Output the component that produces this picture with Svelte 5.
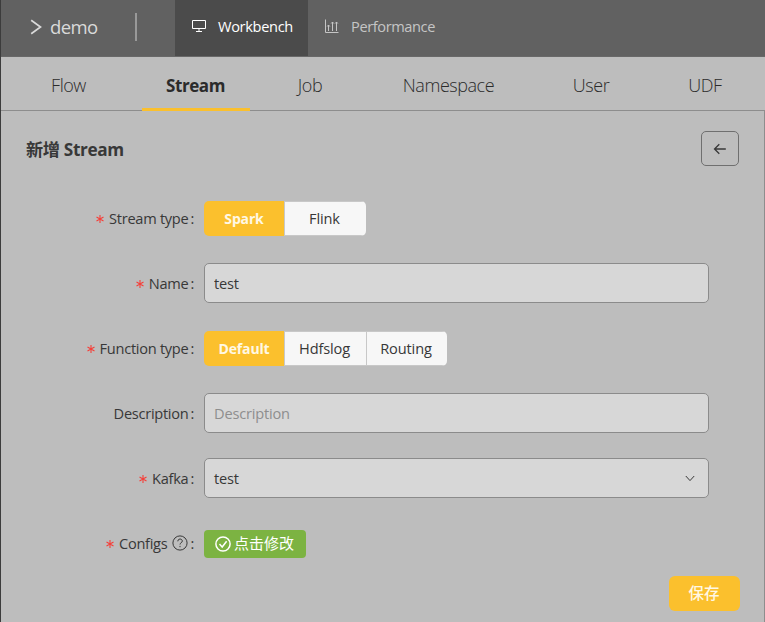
<script>
  let stream = $state('Spark');
  let fn = $state('Default');
  const tabs = [
    { name: 'Flow', width: 136 },
    { name: 'Stream', width: 118 },
    { name: 'Job', width: 111 },
    { name: 'Namespace', width: 166 },
    { name: 'User', width: 119 },
    { name: 'UDF', width: 109 }
  ];
</script>

{#snippet label(text, required = true, help = false)}
  <div class="label">
    {#if required}
      <svg class="star" width="8" height="8" viewBox="0 0 8 8"><path d="M4 0v8M.5 2l7 4M7.5 2l-7 4" /></svg>
    {/if}
    <span>{text}</span>
    {#if help}
      <svg class="help" width="16" height="16" viewBox="0 0 16 16">
        <circle cx="8" cy="8" r="7.1" />
        <path d="M5.8 6.3C5.8 3.2 10.3 3.4 10.3 6.1C10.3 7.8 8 7.7 8 9.5M8 10.9v1.3" />
      </svg>
    {/if}
    <i>:</i>
  </div>
{/snippet}

<div class="app">
  <header>
    <div class="brand">
      <svg width="12" height="16" viewBox="0 0 12 16"><path d="M1.2 1.2L10.5 8L1.2 14.8" /></svg>
      <span>demo</span>
    </div>
    <div class="rule"></div>
    <div class="nav active">
      <svg width="16" height="14" viewBox="0 0 16 14"><path d="M1.5 1.5h13v8h-13zM8 9.5v3M5 12.5h6" /></svg>
      <span>Workbench</span>
    </div>
    <div class="nav perf">
      <svg width="15" height="15" viewBox="0 0 15 15"><path d="M1.5 .5v13h13M4.5 6v6M8.5 3v9M12.5 3v9M3.2 7.5l1.3-1.5l1.3 1.5M7.2 4.5l1.3-1.5l1.3 1.5M11.2 4.5l1.3-1.5l1.3 1.5" /></svg>
      <span>Performance</span>
    </div>
  </header>

  <nav>
    {#each tabs as tab}
      <div class="tab" class:selected={tab.name === 'Stream'} style:width="{tab.width}px"><span>{tab.name}</span></div>
    {/each}
  </nav>

  <main>
    <div class="title">
      <h1>新增 Stream</h1>
      <button class="back" aria-label="Back">
        <svg width="14" height="12" viewBox="0 0 14 12"><path d="M12.8 6H1.5M6.3 1.2L1.5 6l4.8 4.8" /></svg>
      </button>
    </div>

    <form>
      <div class="row">
        {@render label('Stream type')}
        <div class="group">
          {#each ['Spark', 'Flink'] as item}
            <button type="button" class:on={stream === item} onclick={() => (stream = item)}>{item}</button>
          {/each}
        </div>
      </div>
      <div class="row">
        {@render label('Name')}
        <input value="test" />
      </div>
      <div class="row">
        {@render label('Function type')}
        <div class="group">
          {#each ['Default', 'Hdfslog', 'Routing'] as item}
            <button type="button" class:on={fn === item} onclick={() => (fn = item)}>{item}</button>
          {/each}
        </div>
      </div>
      <div class="row">
        {@render label('Description', false)}
        <input placeholder="Description" />
      </div>
      <div class="row">
        {@render label('Kafka')}
        <div class="select">
          <span>test</span>
          <svg width="10" height="7" viewBox="0 0 10 7"><path d="M.8 1L5 5.6L9.2 1" /></svg>
        </div>
      </div>
      <div class="row">
        {@render label('Configs', true, true)}
        <button type="button" class="modify">
          <svg width="16" height="16" viewBox="0 0 16 16"><circle cx="8" cy="8" r="7.1" /><path d="M4.5 8l2.7 3L11.6 5.3" /></svg>
          <span>点击修改</span>
        </button>
      </div>
    </form>
    <button class="save"><span>保存</span></button>
  </main>
</div>

<style>
  :global(body) { margin: 0; overflow: hidden; }
  * { box-sizing: border-box; }
  button, input { font: inherit; letter-spacing: inherit; color: inherit; margin: 0; padding: 0; outline: none; }
  svg { fill: none; stroke: currentColor; flex: none; }
  .app {
    width: 765px; height: 622px; display: flex; flex-direction: column;
    background: #bdbdbd; color: #383838; border-left: 1px solid #3c3c3c;
    font: 14.6px 'Open Sans', 'Noto Sans CJK SC', sans-serif; letter-spacing: -.2px;
  }
  header { height: 57px; flex: none; display: flex; align-items: center; background: #616161; border-bottom: 1px solid #686868; }
  .brand { display: flex; align-items: center; gap: 8px; width: 134px; padding: 0 0 3px 29px; color: #dadada; font-size: 18.5px; letter-spacing: -.6px; }
  .brand svg { stroke-width: 1.7; }
  .rule { width: 2px; height: 28px; margin-right: 38px; background: #999; margin-top: -2px; }
  .nav { height: 56px; display: flex; align-items: center; padding: 0 0 3px 16px; color: #c5c5c5; letter-spacing: -.4px; }
  .nav span { padding-bottom: 2px; }
  .nav.active { width: 133px; background: #4b4b4b; color: #fff; gap: 11px; letter-spacing: -.33px; }
  .nav.active svg { margin-top: -2px; }
  .perf { gap: 12px; }
  nav { height: 54px; flex: none; display: flex; border-bottom: 1px solid #8d8d8d; }
  .tab { height: 54px; display: flex; justify-content: center; align-items: center; padding: 2px 1px 0 0; font-size: 18px; font-weight: 300; letter-spacing: -.45px; color: #2b2b2b; }
  .selected { position: relative; font-weight: 700; font-size: 17px; letter-spacing: -.45px; }
  .selected::after { content: ''; position: absolute; left: 5px; width: 108px; bottom: 0; height: 3px; background: #fbc02d; }
  main { flex: 1; display: flex; flex-direction: column; border-right: 1px solid #8d8d8d; }
  .title { display: flex; justify-content: space-between; padding: 20px 25px 0 25px; height: 75px; }
  h1 { margin: 0; font-size: 17.2px; line-height: 37px; font-weight: 700; letter-spacing: -.35px; }
  .back { width: 38px; height: 35px; border: 1px solid #6f6f6f; border-radius: 5px; background: none; display: flex; align-items: center; justify-content: center; }
  .back svg { stroke-width: 1.3; }
  .row { height: 65px; display: flex; align-items: center; }
  .label { width: 193px; display: flex; align-items: center; justify-content: flex-end; margin-right: 10px; padding-bottom: 2px; white-space: nowrap; letter-spacing: -.28px; }
  .label i { font-style: normal; margin-left: 2px; }
  .star { color: #f5403a; margin-right: 5px; margin-top: 2px; stroke-width: 1.1; }
  .help { margin-left: 5px; }
  .group { display: flex; height: 35px; border-radius: 5px; overflow: hidden; margin-bottom: 1px; }
  .group button { width: 81px; border: 0 solid #c8c8c8; border-width: 1px 0 1px 1px; background: #f7f7f7; font-weight: 500; letter-spacing: -.15px; padding-right: 2px; }
  .group button:first-child { width: 80px; border: 0; padding: 0; }
  .group button:nth-child(2) { width: 82px; }
  .group .on { background: #fbc02d; color: #fff8e5; font-weight: 700; font-size: 14px; }
  input, .select { width: 505px; height: 40px; border: 1px solid #8b8b8b; border-radius: 5px; background: #d7d7d7; padding: 0 9px; margin-bottom: 1px; }
  input::placeholder { color: #8e8e8e; opacity: 1; }
  .select { display: flex; align-items: center; justify-content: space-between; padding-right: 13px; }
  .modify { width: 102px; height: 28px; border: 0; border-radius: 4px; background: #7cb342; color: #fff; display: flex; align-items: center; padding-left: 11px; gap: 3px; font-size: 15px; letter-spacing: 0; }
  .modify svg { stroke-width: 1.5; }
  .modify span { line-height: 26px; padding-bottom: 2px; }
  .save { align-self: flex-end; width: 71px; height: 35px; margin-right: 24px; border: 0; border-radius: 6px; background: #fbc02d; color: #fff8e5; font-size: 15.5px; font-weight: 500; padding: 0 1px 2px 0; letter-spacing: 0; }
</style>
